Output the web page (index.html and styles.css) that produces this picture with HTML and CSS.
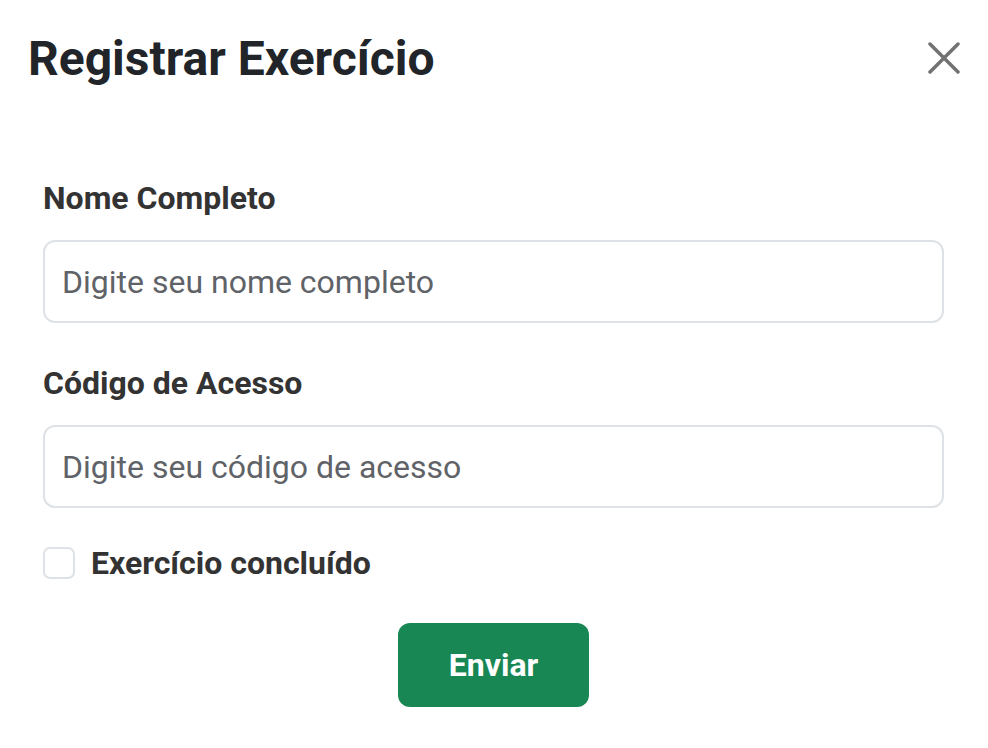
FILE: index.html
```html
<!DOCTYPE html>
<html lang="pt-BR">
<head>
<meta charset="utf-8">
<title>Registrar Exercício</title>
<link rel="stylesheet" href="styles.css">
</head>
<body>
<div class="modal">
  <div class="modal-header">
    <h1 class="modal-title">Registrar Exercício</h1>
    <button class="close-btn" type="button" aria-label="Fechar">
      <svg width="32" height="32" viewBox="0 0 32 32"><path d="M2 2 L30 30 M30 2 L2 30" stroke="#727272" stroke-width="3.5" stroke-linecap="round" fill="none"/></svg>
    </button>
  </div>
  <form class="modal-body">
    <div class="field">
      <label class="field-label" for="nome">Nome Completo</label>
      <input class="field-input" id="nome" type="text" placeholder="Digite seu nome completo">
    </div>
    <div class="field">
      <label class="field-label" for="codigo">Código de Acesso</label>
      <input class="field-input" id="codigo" type="text" placeholder="Digite seu código de acesso">
    </div>
    <label class="check-row">
      <input class="check-box" type="checkbox">
      <span class="check-label">Exercício concluído</span>
    </label>
    <div class="actions">
      <button class="submit-btn" type="button">Enviar</button>
    </div>
  </form>
</div>
</body>
</html>
```
FILE: styles.css
```css
* { box-sizing: border-box; }
html, body { margin: 0; padding: 0; background: #fff; }
body { font-family: Roboto, "Liberation Sans", sans-serif; }

.modal { width: 988px; }

.modal-header {
  display: flex;
  justify-content: space-between;
  align-items: center;
  padding: 30px 28px 0 28px;
}
.modal-title {
  margin: 0;
  font-size: 48px;
  line-height: 58px;
  font-weight: 700;
  color: #212529;
}
.close-btn {
  border: 0;
  background: none;
  padding: 0;
  width: 32px;
  height: 32px;
  display: flex;
  margin-top: -3px;
}

.modal-body {
  padding: 91px 44px 0 43px;
  display: flex;
  flex-direction: column;
}
.field { display: flex; flex-direction: column; gap: 23px; margin-bottom: 41px; }
.field-label {
  font-size: 32px;
  line-height: 38px;
  font-weight: 700;
  color: #333;
}
.field-input {
  height: 83px;
  width: 100%;
  border: 2px solid #dee2e6;
  border-radius: 12px;
  padding: 0 17px;
  font-family: Roboto, "Liberation Sans", sans-serif;
  font-size: 32px;
  color: #212529;
  background: #fff;
  outline: none;
}
.field-input::placeholder { color: #5f6368; opacity: 1; }

.check-row {
  display: flex;
  align-items: center;
  gap: 16px;
  margin-top: -5px;
}
.check-box {
  appearance: none;
  -webkit-appearance: none;
  margin: 0;
  width: 32px;
  height: 32px;
  border: 2px solid #dee2e6;
  border-radius: 7px;
  background: #fff;
}
.check-label {
  font-size: 32px;
  line-height: 38px;
  font-weight: 700;
  color: #333;
}

.actions { display: flex; justify-content: center; margin-top: 41px; }
.submit-btn {
  width: 191px;
  height: 84px;
  border: 0;
  border-radius: 12px;
  background: #198754;
  color: #fff;
  font-family: Roboto, "Liberation Sans", sans-serif;
  font-size: 32px;
  font-weight: 700;
}
```
